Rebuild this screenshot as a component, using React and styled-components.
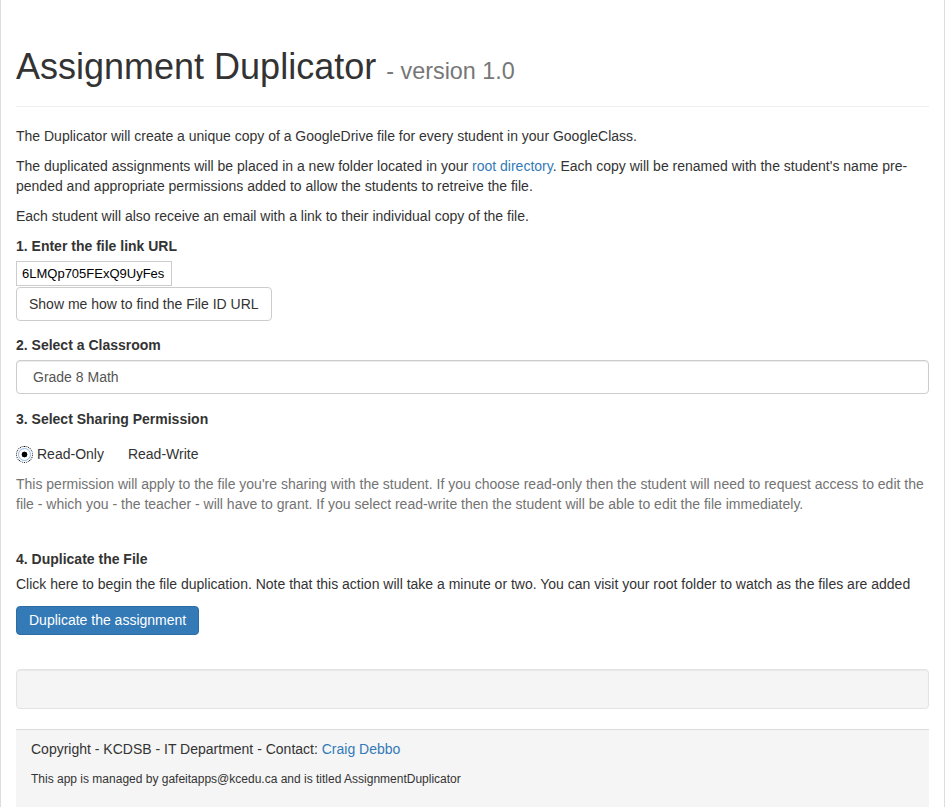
import React from "react";
import styled, {createGlobalStyle} from "styled-components";

const GlobalStyle = createGlobalStyle`
  html, body {
    margin: 0;
    padding: 0;
    background: #fff;
  }
  body {
    font-family: "Liberation Sans", Arial, Helvetica, sans-serif;
    font-size: 14px;
    line-height: 1.42857143;
    color: #333;
  }
  * {
    box-sizing: border-box;
  }
`;

const Page = styled.div`
  width: 945px;
  min-height: 807px;
  border-left: 1px solid #ddd;
  border-right: 1px solid #ddd;
  padding: 47px 15px 0;
`;

const PageHeader = styled.div`
  padding-bottom: 9px;
  margin-bottom: 19px;
  border-bottom: 1px solid #eee;
`;

const Title = styled.h1`
  margin: 0 0 10px;
  font-size: 36px;
  font-weight: 500;
  line-height: 1.1;
  color: #333;

  small {
    font-size: 65%;
    font-weight: 400;
    color: #777;
  }
`;

const Para = styled.p`
  margin: 0 0 ${p => p.$gap || 10}px;
  color: #333;
`;

const Link = styled.a`
  color: #337ab7;
  text-decoration: none;
`;

const Label = styled.label`
  display: block;
  margin-top: ${p => p.$top || 0}px;
  margin-bottom: 5px;
  font-weight: 700;
`;

const FileInput = styled.input`
  display: block;
  width: 156px;
  height: 25px;
  margin: 1px 0 1px;
  padding: 1px 5px;
  border: 1px solid #ccc;
  font-family: "Liberation Sans", Arial, sans-serif;
  font-size: 13px;
  color: #000;
  background: #fff;
`;

const Button = styled.button`
  display: inline-block;
  height: ${p => (p.$primary ? 29 : 34)}px;
  padding: 0 12px;
  font-family: "Liberation Sans", Arial, sans-serif;
  font-size: 14px;
  line-height: 1;
  border-radius: 4px;
  cursor: pointer;
  color: ${p => (p.$primary ? "#fff" : "#333")};
  background: ${p => (p.$primary ? "#337ab7" : "#fff")};
  border: 1px solid ${p => (p.$primary ? "#2e6da4" : "#ccc")};
`;

const Select = styled.div`
  height: 34px;
  padding: 0 16px;
  display: flex;
  align-items: center;
  border: 1px solid #ccc;
  border-radius: 4px;
  color: #555;
  background: #fff;
  box-shadow: inset 0 1px 1px rgba(0, 0, 0, 0.075);
`;

const RadioRow = styled.div`
  display: flex;
  align-items: center;
  margin-top: 15px;
  height: 20px;
`;

const RadioOption = styled.label`
  display: flex;
  align-items: center;
  margin-right: 24px;
  font-weight: 400;
`;

const Radio = styled.span`
  width: 13px;
  height: 13px;
  margin: 2px 6px 0 2px;
  border-radius: 50%;
  border: 1px solid #8fb8e4;
  background: ${p =>
    p.$checked
      ? "radial-gradient(circle, #000 0 2.6px, #fff 3.2px)"
      : "#fff"};
  outline: ${p => (p.$checked ? "1px dotted #000" : "none")};
  outline-offset: 1px;
`;

const HelpBlock = styled.p`
  margin: 10px 0 35px;
  color: #737373;
`;

const Well = styled.div`
  min-height: 40px;
  margin: 34px 0 20px;
  background: #f5f5f5;
  border: 1px solid #e3e3e3;
  border-radius: 4px;
  box-shadow: inset 0 1px 1px rgba(0, 0, 0, 0.05);
`;

const Footer = styled.footer`
  min-height: 78px;
  padding: 9px 15px 20px;
  background: #f5f5f5;
  border-top: 1px solid #ddd;
`;

const FooterLine = styled.p`
  margin: 0 0 ${p => p.$gap || 0}px;
  font-size: ${p => p.$size || 14}px;
  color: #333;
`;

export default function App() {
  return (
    <>
      <GlobalStyle />
      <Page>
        <PageHeader>
          <Title>
            Assignment Duplicator <small>- version 1.0</small>
          </Title>
        </PageHeader>

        <Para>
          The Duplicator will create a unique copy of a GoogleDrive file for
          every student in your GoogleClass.
        </Para>
        <Para>
          The duplicated assignments will be placed in a new folder located in
          your <Link href="#">root directory</Link>. Each copy will be renamed
          with the student's name pre-pended and appropriate permissions added
          to allow the students to retreive the file.
        </Para>
        <Para>
          Each student will also receive an email with a link to their
          individual copy of the file.
        </Para>

        <Label>1. Enter the file link URL</Label>
        <FileInput defaultValue="6LMQp705FExQ9UyFes" />
        <Button>Show me how to find the File ID URL</Button>

        <Label $top={14}>2. Select a Classroom</Label>
        <Select>Grade 8 Math</Select>

        <Label $top={15}>3. Select Sharing Permission</Label>
        <RadioRow>
          <RadioOption>
            <Radio $checked />
            Read-Only
          </RadioOption>
          <RadioOption>Read-Write</RadioOption>
        </RadioRow>
        <HelpBlock>
          This permission will apply to the file you're sharing with the
          student. If you choose read-only then the student will need to
          request access to edit the file - which you - the teacher - will have
          to grant. If you select read-write then the student will be able to
          edit the file immediately.
        </HelpBlock>

        <Label>4. Duplicate the File</Label>
        <Para $gap={12}>
          Click here to begin the file duplication. Note that this action will
          take a minute or two. You can visit your root folder to watch as the
          files are added
        </Para>
        <Button $primary>Duplicate the assignment</Button>

        <Well />

        <Footer>
          <FooterLine $gap={12}>
            Copyright - KCDSB - IT Department - Contact:{" "}
            <Link href="#">Craig Debbo</Link>
          </FooterLine>
          <FooterLine $size={12}>
            This app is managed by gafeitapps@kcedu.ca and is titled
            AssignmentDuplicator
          </FooterLine>
        </Footer>
      </Page>
    </>
  );
}
